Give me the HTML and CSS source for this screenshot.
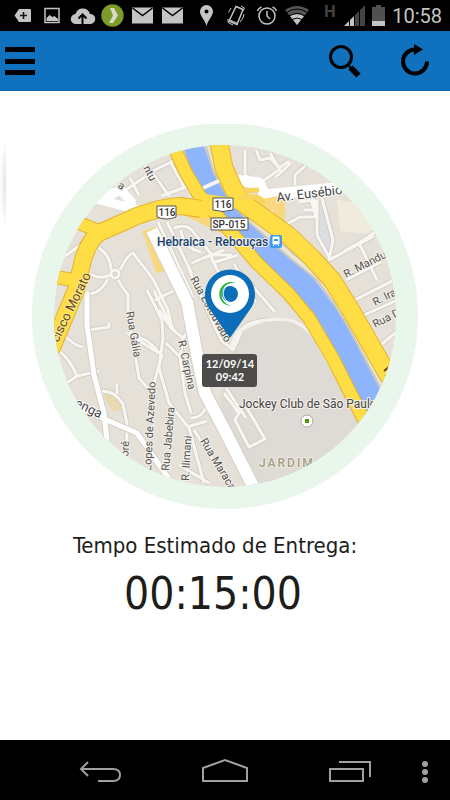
FILE: index.html
```html
<!DOCTYPE html>
<html lang="pt-BR">
<head>
    <meta charset="UTF-8">
    <meta name="viewport" content="width=device-width, initial-scale=1.0">
    <title>Tempo de Entrega</title>
    <link rel="stylesheet" href="styles.css">
</head>
<body>
    <div class="status-bar">
        <div class="status-icons">
            <svg viewBox="0 0 30 31"><path fill="#c4c4c4" d="M11 9h11q1 0 1 1v11q0 1-1 1H11L6.500 15.500z"/><path d="M12 15.500h7M15.500 12v7" stroke="#111" stroke-width="1.500"/></svg>
            <svg viewBox="0 0 30 31"><path d="M7 8.500h14v14H7z" fill="none" stroke="#c4c4c4" stroke-width="1.500"/><path fill="#c4c4c4" d="M8.500 21v-3l3-3 3 2 2-1 3.500 3v2z"/></svg>
            <svg viewBox="0 0 30 31"><path fill="#c4c4c4" d="M8 24a5 5 0 0 1-.5-10 7.500 7.500 0 0 1 14.500 0 5 5 0 0 1 .5 10z"/><path d="M14.500 24v-8M10.500 18.500l4-4 4 4" fill="none" stroke="#000" stroke-width="2"/></svg>
            <svg viewBox="0 0 30 31"><circle cx="14.500" cy="15.500" r="11.200" fill="#7d9b29"/><path d="M12 8h4l4 7.500-5 7.500h-4l4-7.500z" fill="#d5d8cc"/></svg>
            <svg viewBox="0 0 30 31"><path fill="#c4c4c4" d="M4 7.500h21v16H4z"/><path d="M4.500 8l10 7.500 10-7.500" fill="none" stroke="#000" stroke-width="1.500"/></svg>
            <svg viewBox="0 0 30 31"><path fill="#c4c4c4" d="M4 7.500h21v16H4z"/><path d="M4.500 8l10 7.500 10-7.500" fill="none" stroke="#000" stroke-width="1.500"/></svg>
        </div>
        <div class="status-icons">
            <svg viewBox="0 0 30 31"><path fill="#c4c4c4" d="M14.500 26C13 20 8 16 8 11.500a6.500 6.500 0 0 1 13 0C21 16 16 20 14.500 26z"/><circle cx="14.500" cy="11.500" r="2" fill="#000"/></svg>
            <svg viewBox="0 0 30 31"><g fill="none" stroke="#c4c4c4"><path stroke-width="1.500" d="M14 6.500l7 3-6 15-8-3.500z"/><path d="M8 20l7 3M19 6l3.500 2-1.500 3M22 14l-1 4-3 4M9 8l-2.500 4.500M11 25l-5-2.500V19"/></g></svg>
            <svg viewBox="0 0 30 31"><g fill="none" stroke="#c4c4c4" stroke-width="1.500"><circle cx="15" cy="16" r="8"/><path d="M15 11v5l3 3M5.500 11q1-3 4-4M24.500 11q-1-3-4-4"/></g></svg>
            <svg viewBox="0 0 30 31"><path fill="#555" d="M3 10q12-8 24 0L15 25z"/><path fill="#c4c4c4" d="M8 16q7-4 14 0l-7 9z"/><path d="M4.500 12.500q10.500-7 21 0M7 16q8-5 16 0M10 19.500q5-3 10 0" fill="none" stroke="#000"/></svg>
        </div>
        <span class="network">H</span>
        <svg class="signal" viewBox="0 0 22 31"><path fill="#c4c4c4" d="M0 26l5-5v5zM6 20l4-4v10H6z"/><path fill="#444" d="M11 15l4-4v15h-4zM16 10l5-5v21h-5z"/></svg>
        <svg class="battery" viewBox="0 0 13 31"><path fill="#505050" d="M4 5h5v2h4v14H0V7h4z"/><path fill="#c4c4c4" d="M0 21h13v5H0z"/></svg>
        <span class="clock">10:58</span>
    </div>

    <header class="toolbar">
        <button class="tool" aria-label="Menu">
            <svg viewBox="0 0 40 40"><path d="M5 8.500h30M5 20.500h30M5 31.500h30" stroke="#000" stroke-width="5"/></svg>
        </button>
        <div class="tools">
            <button class="tool" aria-label="Buscar">
                <svg viewBox="0 0 40 40"><circle cx="17" cy="16" r="10.500" fill="none" stroke="#000" stroke-width="3"/><path d="M24 24l4 4" stroke="#000" stroke-width="2"/><path d="M26.500 26.500l8 8" stroke="#000" stroke-width="6"/></svg>
            </button>
            <button class="tool" aria-label="Atualizar">
                <svg viewBox="0 0 40 40"><path d="M21 8.500a12 12 0 1 0 12 12" fill="none" stroke="#000" stroke-width="4"/><path d="M20 3l9 5.500-9 5.500z"/></svg>
            </button>
        </div>
    </header>

    <main class="content">
        <div class="drawer-edge"></div>

        <svg class="map" viewBox="33 124 386 386" role="img" aria-label="Mapa da entrega">
            <defs>
                <clipPath id="round"><circle cx="226" cy="316" r="171"/></clipPath>
                <g id="streets">
                    <path d="M98 175l20 10M112 200l44-30 20-10M131 178l9 17M143 162l10 10 17 24M162 196l25-9M172 163l13 24M120 190l17 14"/>
                    <path d="M66 256l20-14M100 248q12 8 12 22M92 274q8 6 20 1M121 270q8-16 13-17l20 26 15 31 4 17M119 280q6 10 10 15v20l8 45 3 18 10 12M109 279q-8 15-20 15"/>
                    <path d="M90 330l20-3v-4M55 325q18 20 28 22M58 350q13 8 20 26l-12 8M78 376l22-5M98 392q16-4 26 12l4 20v20M118 384v10"/>
                    <path d="M128 333l35 22-3 10-6 22M148 290l15 30 1 18-4 30 10 35 20 25 15 55M130 336q18 0 30 17"/>
                    <path d="M160 310l12 18 12 10 6-8M167 343l20 20M184 338l-3 20 5 35 6 20M156 300l18-9M155 291l20 40"/>
                    <path d="M188 427l20-6M192 418q10 0 14-9M195 430l32 50M180 465l30 18M205 409l10 6"/>
                    <path d="M159 222l35 75M168 222l25 52M175 228q14-5 20 5l18 22h20M182 230q2 18 20 22M205 258l20-8M193 263l18-8 10 20M213 263l26-8"/>
                    <path d="M190 270l32 70 12 10 10-22q8-7 25-8M235 264l22 38M250 282l26 30M222 275l20 40"/>
                    <path d="M246 150v25l15 10M257 150l4 10 10-2 10 11-20 14M271 153l9 15 10-7M296 185v-10l20-18M292 163l-15 14"/>
                    <path d="M288 224l13-7h16l-5-18M300 202l15-2v10h-10M322 195l12 45-4 20 45-24M318 200v35l12 22M345 251q20-10 35-22M361 245l17 35M347 280l35-18M356 300l45-23M365 315l40-18M378 348l22-18"/>
                    <path d="M227 388l20 30M225 393l15 20-4 7 14 27 16-8-20-34-10 6"/>
                </g>
            </defs>
            <circle cx="226" cy="316" r="193" fill="#e8f6ec"/>
            <g clip-path="url(#round)">
                <path d="M50 140h350v350H50z" fill="#e5e1d8"/>
                <!-- blocks -->
                <path d="M221 400l11-50 12-20q23-16 53-10 15 7 24 30l42 75-60 75h-45l-35-90z" fill="#dedad6"/>
                <path d="M338 200l35 5 20 24-14 6-38-4z" fill="#f0ebdd"/>
                <path d="M319 204l8-1 6 40-2 13-13-22z" fill="#dcdde1"/>
                <path d="M330 260l42-23-5-1-25 13z" fill="#dcdde1"/>
                <path d="M105 394q12-2 20 10v6l-11 1q-8-9-9-17z" fill="#e9d9b0"/>
                <g fill="none" stroke-linejoin="round">
                    <use href="#streets" stroke="#d4cfc6" stroke-width="5"/>
                    <circle cx="116" cy="274" r="4" stroke="#d4cfc6" stroke-width="5"/>
                    <use href="#streets" stroke="#f8f6f3" stroke-width="3"/>
                    <circle cx="116" cy="274" r="4" stroke="#f8f6f3" stroke-width="3"/>
                    <path d="M244 329q23-13 50-8 19 8 27 27l40 72" stroke="#f4f1ec" stroke-width="3"/>
                    <path d="M230 345q2 3 4-1 4-14 12-16" stroke="#f4f1ec" stroke-width="4"/>

                    <!-- white avenues -->
                    <path d="M88 292v33l7 50 10 38 4 37M75 405l35 16 28 12 32 46" stroke="#d4cfc6" stroke-width="7"/>
                    <path d="M88 292v33l7 50 10 38 4 37M75 405l35 16 28 12 32 46" stroke="#fff" stroke-width="5"/>
                    <path d="M97 199l55 14M100 198l22-8 12 14" stroke="#fff" stroke-width="9"/>
                    <path d="M150 229l14 42" stroke="#f9d77c" stroke-width="14"/>
                    <path d="M153 230l35 72 12 63 6 28 20 38 28 55" stroke="#d4cfc6" stroke-width="14"/>
                    <path d="M153 230l35 72 12 63 6 28 20 38 28 55" stroke="#fff" stroke-width="12"/>
                    <path d="M236 180l24 3 6 12 80-8" stroke="#fff" stroke-width="11"/>

                    <!-- river -->
                    <path d="M192 140l8 22 12 25 12 17 14 14" stroke="#8eb4fb" stroke-width="20"/>
                    <path d="M224 202l12 15 37 43 31 26 25 33 19 35 30 58" stroke="#8eb4fb" stroke-width="26"/>
                    <path d="M208 140l9 30 15 27 18 21 43 38 27 22 16 22 16 26 35 66" stroke="#cbc7ba" stroke-width="8"/>
                    <path d="M208 140l9 30 15 27 18 21 43 38 27 22 16 22 16 26 35 66" stroke="#e8e5da" stroke-width="4"/>
                    <path d="M204 188l20-9" stroke="#f7f5ef" stroke-width="4"/>

                    <!-- highways -->
                    <path d="M185 207l42 20" stroke="#f9d77c" stroke-width="15"/>
                    <path d="M258 206l22-4v28" stroke="#f9d77c" stroke-width="12"/>
                    <path d="M174 145l13 28 13 22 20 23 37 44 33 32 20 24 23 39 32 63" stroke="#e3b32d" stroke-width="14"/>
                    <path d="M174 145l13 28 13 22 20 23 37 44 33 32 20 24 23 39 32 63" stroke="#ffdd45" stroke-width="12"/>
                    <path d="M219 138l6 30 9 20 10 15 21 15 25 18 23 22 20 22 17 27 42 73" stroke="#e3b32d" stroke-width="19"/>
                    <path d="M219 138l6 30 9 20 10 15 21 15 25 18 23 22 20 22 17 27 42 73" stroke="#ffdd45" stroke-width="17"/>
                    <path d="M52 350l25-60 7-30q6-20 16-27 20-9 38-17 28-10 44-10l20 3" stroke="#e3b32d" stroke-width="18"/>
                    <path d="M75 221l25 10M57 277l22 4" stroke="#e3b32d" stroke-width="14"/>
                    <path d="M75 221l25 10M57 277l22 4" stroke="#ffdd45" stroke-width="12"/>
                    <path d="M52 350l25-60 7-30q6-20 16-27 20-9 38-17 28-10 44-10l28 4" stroke="#ffdd45" stroke-width="16"/>
                    <path d="M205 199l42 6" stroke="#ffdd45" stroke-width="10"/>
                    <path d="M244 191l16-1M240 198q24-4 24 6" stroke="#f9d45a" stroke-width="5"/>
                    <path d="M385 371l5-4M386 376l4-1" stroke="#6a4420" stroke-width="2"/>
                </g>

                <g class="street-name">
                    <text transform="translate(118 187) rotate(35)">a</text>
                    <text transform="translate(144 168) rotate(62)">ntu</text>
                    <text transform="translate(191 279) rotate(61)">Rua Estouvado</text>
                    <text transform="translate(127 312) rotate(80)">Rua Gália</text>
                    <text transform="translate(179 341) rotate(78)">R. Carpina</text>
                    <text transform="translate(152 471) rotate(-87)">Lopes de Azevedo</text>
                    <text transform="translate(170 471) rotate(-85)">Rua Jabebira</text>
                    <text transform="translate(190 481) rotate(-87)">R. Ilimani</text>
                    <text transform="translate(201 441) rotate(59)">Rua Maraca</text>
                    <text transform="translate(129 463) rotate(-87)">poré</text>
                    <text transform="translate(347 278) rotate(-27)">R. Mandu</text>
                    <text transform="translate(376 306) rotate(-27)">R. Ira</text>
                    <text transform="translate(376 328) rotate(-27)">Rua D</text>
                </g>
                <g class="road-name">
                    <text transform="translate(278 202) rotate(-7)">Av. Eusébio</text>
                    <text transform="translate(75 406) rotate(26)">enga</text>
                    <text class="morato" transform="translate(59 343) rotate(-64)">cisco Morato</text>
                </g>
                <g class="shield">
                    <path d="M158 206h19v11q-9 4-19 0zM214 198h20v12q-10 3-20 0zM212 218h37v12h-37z"/>
                    <text x="168" y="216">116</text>
                    <text x="224" y="208">116</text>
                    <text x="230" y="228">SP-015</text>
                </g>
                <text class="station" x="158" y="246">Hebraica - Rebouças</text>
                <rect x="271" y="235" width="12" height="13" rx="2" fill="#3f9bed"/>
                <path d="M274 237h6v7h-6zM274 246l1-1M280 246l-1-1" fill="#fff" stroke="#fff"/>
                <path d="M275 239h4v2h-4z" fill="#3f9bed"/>
                <text class="place" x="240" y="408">Jockey Club de São Paulo</text>
                <circle cx="308" cy="421" r="6" fill="#fff" stroke="#aaa69f"/>
                <path d="M306 419h4v4h-4z" fill="#4d9d0b"/>
                <text class="district" x="260" y="467">JARDIM</text>

                <!-- courier pin -->
                <path d="M231 338l-21-30a25 25 0 1 1 42 0z" fill="#0c6eb9"/>
                <circle cx="231" cy="294" r="19" fill="#fff"/>
                <circle cx="231" cy="294" r="8" fill="#0c6eb9"/>
                <path d="M237 283a12 12 0 1 0-5 23 10.800 10.800 0 0 1 5-23z" fill="#2eb34a"/>
                <path d="M238 285a9.500 9.500 0 1 0-4 18" fill="none" stroke="#fff"/>
                <rect x="203" y="354" width="55" height="33" rx="3" fill="#4d4c4b"/>
                <g class="stamp">
                    <text x="231" y="368">12/09/14</text>
                    <text x="231" y="381">09:42</text>
                </g>
            </g>
        </svg>

        <h1 class="label">Tempo Estimado de Entrega:</h1>
        <p class="time">00:15:00</p>
    </main>

    <nav class="nav-bar">
        <button aria-label="Voltar"><svg viewBox="0 0 46 30"><path d="M11 4l-7 7 7 7M4 11h32q7 0 7 6t-7 6H21"/></svg></button>
        <button aria-label="Início"><svg viewBox="0 0 46 30"><path d="M1 10L23 2l22 8v13H1z"/></svg></button>
        <button aria-label="Recentes"><svg viewBox="0 0 46 30"><path d="M3 11h33v12H3zM12 4h31v15"/></svg></button>
        <button class="more" aria-label="Mais opções"><svg viewBox="0 0 10 30"><circle cx="5" cy="6" r="3"/><circle cx="5" cy="14" r="3"/><circle cx="5" cy="22" r="3"/></svg></button>
    </nav>
</body>
</html>
```
FILE: styles.css
```css
* {
    box-sizing: border-box;
}
body {
    display: flex;
    flex-direction: column;
    min-height: 100vh;
    margin: 0;
    background-color: #fff;
    color: #1d1d1b;
    font-family: Roboto, Arial, sans-serif;
}
button {
    padding: 0;
    border: none;
    background: none;
    cursor: pointer;
}
svg {
    display: block;
}
.status-bar {
    display: flex;
    align-items: center;
    height: 31px;
    padding: 0 8px;
    background-color: #000;
}
.status-icons {
    display: flex;
    margin-right: 4px;
}
.status-icons svg {
    width: 30px;
    height: 31px;
}
.network {
    width: 28px;
    margin-bottom: 8px;
    color: #444;
    font-size: 16px;
    font-weight: bold;
    line-height: 16px;
    text-align: center;
}
.signal {
    width: 22px;
    height: 31px;
}
.battery {
    width: 13px;
    height: 31px;
    margin-left: 6px;
}
.clock {
    margin-left: auto;
    color: #c4c4c4;
    font-size: 20px;
}
.toolbar {
    display: flex;
    align-items: center;
    justify-content: space-between;
    height: 60px;
    padding-right: 16px;
    background-color: #1072be;
    border-bottom: 1px solid #0a62aa;
}
.tools {
    display: flex;
    gap: 30px;
}
.tool svg {
    width: 40px;
    height: 40px;
}
.content {
    position: relative;
    flex-grow: 1;
    padding-top: 33px;
    text-align: center;
}
.drawer-edge {
    position: absolute;
    top: 49px;
    left: 0;
    width: 6px;
    height: 88px;
    background: radial-gradient(ellipse at right, #e2e2e2, #fff 75%);
}
.map {
    width: 86%;
    max-width: 386px;
    margin: 0 auto;
}
.map text {
    paint-order: stroke;
    stroke-linejoin: round;
}
.street-name {
    fill: #55524e;
    stroke: #f4f1ec;
    stroke-width: 2px;
    font-size: 11px;
}
.road-name {
    fill: #444;
    stroke: #fff;
    stroke-width: 2px;
    font-size: 13px;
}
.road-name .morato {
    fill: #66471f;
    stroke: #ffe98c;
}
.shield path {
    fill: #fff;
    stroke: #555;
}
.shield text {
    fill: #333;
    font-size: 10px;
    font-weight: 500;
    text-anchor: middle;
}
.station,
.place {
    fill: #174270;
    stroke: #f4f1ec;
    stroke-width: 2px;
    font-size: 12px;
    font-weight: 500;
}
.place {
    fill: #444;
    font-weight: normal;
}
.district {
    fill: #a59c80;
    stroke: #f0ede6;
    stroke-width: 2px;
    font-size: 12px;
    font-weight: 500;
    letter-spacing: 2px;
}
.stamp {
    fill: #fff;
    font-family: Lato, sans-serif;
    font-size: 11px;
    font-weight: bold;
    text-anchor: middle;
}
.label {
    margin: 22px 20px 0 0;
    font-family: "DejaVu Sans Condensed", Tahoma, "DejaVu Sans", sans-serif;
    font-size: 22px;
    font-weight: normal;
    line-height: 28px;
}
.time {
    margin: 8px 24px 0 0;
    font-family: "DejaVu Sans Condensed", Tahoma, "DejaVu Sans", sans-serif;
    font-size: 44px;
    line-height: 52px;
}
.nav-bar {
    display: flex;
    height: 60px;
    padding: 0 12px 0 38px;
    background-color: #000;
}
.nav-bar button {
    display: flex;
    flex: 1;
    align-items: center;
    justify-content: center;
}
.nav-bar svg {
    width: 46px;
    height: 30px;
    margin-top: 6px;
    fill: none;
    stroke: #a0a0a0;
    stroke-width: 2px;
}
.nav-bar .more {
    flex: 0 0 26px;
}
.nav-bar .more svg {
    width: 10px;
    fill: #a0a0a0;
    stroke: none;
}
```
